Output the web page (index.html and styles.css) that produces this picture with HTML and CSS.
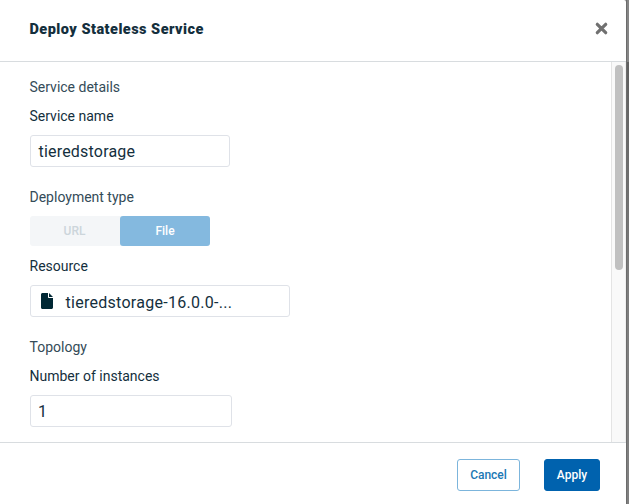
FILE: index.html
```html
<!DOCTYPE html>
<html lang="en">
<head>
<meta charset="utf-8">
<title>Deploy Stateless Service</title>
<link rel="stylesheet" href="styles.css">
</head>
<body>
<div class="backdrop">
  <section class="dialog">
    <header class="header">
      <h1 class="title">Deploy Stateless Service</h1>
      <svg class="close" width="13" height="13" viewBox="0 0 13 13"><path d="M2.300 2.300 10.700 10.700M10.700 2.300 2.300 10.700" stroke="#707070" stroke-width="3.2" stroke-linecap="round"/></svg>
    </header>
    <div class="body">
      <div class="form">
        <div class="label section">Service details</div>
        <div class="label">Service name</div>
        <div class="field name"><span>tieredstorage</span></div>
        <div class="label section">Deployment type</div>
        <div class="toggle"><div class="option">URL</div><div class="option selected">File</div></div>
        <div class="label">Resource</div>
        <div class="field resource">
          <svg class="file" width="12" height="16" viewBox="0 0 12 16"><path d="M1.5 0H7v4.2c0 .5.3.8.8.8H12v9.500c0 .8-.7 1.500-1.500 1.500h-9C.7 16 0 15.300 0 14.500v-13C0 .7.7 0 1.500 0ZM8 0l4 4H8Z" fill="#002734"/></svg>
          <span class="filename">tieredstorage-16.0.0-...</span>
        </div>
        <div class="label section">Topology</div>
        <div class="label">Number of instances</div>
        <div class="field count"><span>1</span></div>
      </div>
      <div class="track"><div class="thumb"></div></div>
    </div>
    <footer class="footer">
      <div class="button cancel">Cancel</div>
      <div class="button apply">Apply</div>
    </footer>
  </section>
  <div class="edge"></div>
</div>
</body>
</html>
```

FILE: styles.css
```css
* { box-sizing: border-box; }
body {
  margin: 0;
  font-family: Roboto, "Liberation Sans", sans-serif;
  color: #142f3d;
  background: #fff;
}
.backdrop { display: flex; width: 629px; height: 504px; overflow: hidden; background: #808080; }
.dialog { display: flex; flex-direction: column; width: 626px; background: #fff; border-top-right-radius: 2px; }
.edge { width: 3px; background: linear-gradient(#858585 0 62px, #606060 62px, #7d7d7d 288px, #808080); border-left: 1px solid #6c6c6c; }
.header {
  display: flex;
  justify-content: space-between;
  height: 62px;
  padding: 20px 18px 0 29.5px;
  border-bottom: 1px solid #d8dcdf;
}
.title { margin: 0; font-size: 14.5px; line-height: 20px; font-weight: 900; letter-spacing: .47px; }
.close { margin-top: 2px; }
.body { display: flex; height: 380px; }
.form { flex: 1; padding: 15px 0 0 30px; }
.label { height: 20px; margin-left: -.5px; font-size: 14px; line-height: 20px; color: #142f3d; }
.section { margin-bottom: 9px; color: #344b58; }
.field {
  display: flex;
  align-items: center;
  height: 32px;
  margin: 9px 0 20px;
  padding: 1px 7.5px 0;
  border: 1px solid #dfe2e8;
  border-radius: 3px;
  font-size: 16px;
  letter-spacing: .2px;
}
.name { width: 200px; }
.resource { width: 260px; padding: 0 10px; }
.count { width: 202px; padding-left: 7px; }
.file { margin-bottom: 1px; }
.filename { margin-left: 12.5px; padding-top: 2px; letter-spacing: .28px; }
.toggle { display: flex; width: 180px; height: 30px; margin-bottom: 10px; background: #f4f6f8; border-radius: 3px; }
.option { width: 89px; line-height: 30px; text-align: center; font-size: 12px; font-weight: 500; color: #ccd5db; }
.selected { width: 90px; margin-left: auto; background: #84b9df; color: #fff; border-radius: 3px; }
.track { width: 15px; padding: 3px 2px 0 3px; background: #f9f9f9; border-left: 1px solid #e4e4e4; border-right: 1px solid #eee; }
.thumb { width: 8px; height: 205px; border-radius: 4px; background: #c0c0c0; }
.footer {
  display: flex;
  justify-content: flex-end;
  gap: 24px;
  flex: 1;
  padding: 16px 26px 0 0;
  border-top: 1px solid #d8dcdf;
}
.button { height: 32px; border: 1px solid #0062ae; border-radius: 3px; font-size: 12px; line-height: 31px; font-weight: 500; text-align: center; }
.cancel { width: 63px; border-color: #7cb5dc; color: #2078b4; }
.apply { width: 56px; background: #0062ae; color: #fff; }
```
